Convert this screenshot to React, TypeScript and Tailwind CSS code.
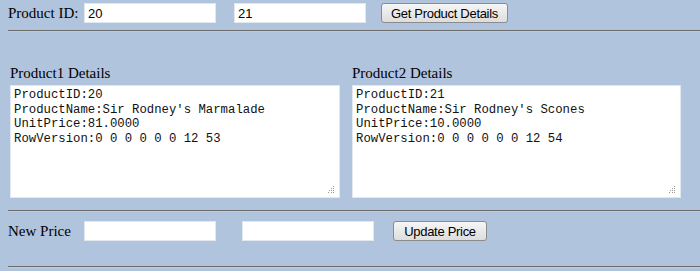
import React from "react";

const serif = { fontFamily: '"Liberation Serif", "Times New Roman", serif' };

const Hr = ({ className = "" }: { className?: string }) => (
    <div className={`ml-2 border-t border-t-[#6c6c6c] border-b border-b-[#c3cbd6] ${className}`} />
);

const TextBox = ({ value, className = "" }: { value?: string; className?: string }) => (
    <input
        defaultValue={value}
        className={`h-[20px] w-[132px] bg-white border border-[#e3e7ee] px-[3px] text-[13px] text-black outline-none font-['Liberation_Sans',Arial,sans-serif] ${className}`}
    />
);

const Btn = ({ label, className = "" }: { label: string; className?: string }) => (
    <button className={`h-[20px] rounded-[3px] border border-[#8c8c8c] bg-gradient-to-b from-[#f6f6f6] to-[#dddddd] text-[13px] text-black leading-none tracking-[-0.3px] font-['Liberation_Sans',Arial,sans-serif] ${className}`}>
        {label}
    </button>
);

// dotted resize grip like the old IE/Firefox textarea
const Grip = () => (
    <svg className="absolute right-[5px] bottom-[5px]" width="7" height="7" viewBox="0 0 7 7">
        {[[5, 0], [3, 2], [5, 2], [1, 4], [3, 4], [5, 4], [0, 6], [3, 6], [5, 6]].map(([x, y], i) => (
            <rect key={i} x={x} y={y} width="1" height="1" fill="#9a9a9a" />
        ))}
    </svg>
);

const Details = ({ title, lines, className = "" }: { title: string; lines: string[]; className?: string }) => (
    <div className={className}>
        <div className="text-[15px] leading-[18px] text-black" style={serif}>{title}</div>
        <div className="relative mt-[3px]">
            <textarea
                readOnly
                defaultValue={lines.join("\n")}
                className="block h-[113px] w-full resize-none bg-white border border-[#e3e7ee] px-[3px] py-[2px] text-[12.3px] leading-[14.6px] text-[#111] outline-none font-['Liberation_Mono','Courier_New',monospace]"
            />
            <Grip />
        </div>
    </div>
);

export default function App() {
    return (
        <div className="w-[700px] h-[271px] overflow-hidden bg-[#b0c4de] pt-[3px]" style={serif}>
            <div className="flex items-center h-[20px] pl-2">
                <span className="text-[15px] text-black w-[76px]">Product ID:</span>
                <TextBox value="20" />
                <TextBox value="21" className="ml-[18px]" />
                <Btn label="Get Product Details" className="ml-[15px] w-[127px]" />
            </div>

            <Hr className="mt-[7px]" />

            <div className="flex mt-[32px]">
                <Details
                    title="Product1 Details"
                    className="ml-[10px] w-[330px]"
                    lines={[
                        "ProductID:20",
                        "ProductName:Sir Rodney's Marmalade",
                        "UnitPrice:81.0000",
                        "RowVersion:0 0 0 0 0 0 12 53",
                    ]}
                />
                <Details
                    title="Product2 Details"
                    className="ml-[12px] w-[329px]"
                    lines={[
                        "ProductID:21",
                        "ProductName:Sir Rodney's Scones",
                        "UnitPrice:10.0000",
                        "RowVersion:0 0 0 0 0 0 12 54",
                    ]}
                />
            </div>

            <Hr className="mt-[12px]" />

            <div className="flex items-center h-[20px] pl-2 mt-[9px]">
                <span className="text-[15px] text-black w-[76px]">New Price</span>
                <TextBox />
                <TextBox className="ml-[26px]" />
                <Btn label="Update Price" className="ml-[19px] w-[94px]" />
            </div>

            <Hr className="mt-[25px]" />
        </div>
    );
}
